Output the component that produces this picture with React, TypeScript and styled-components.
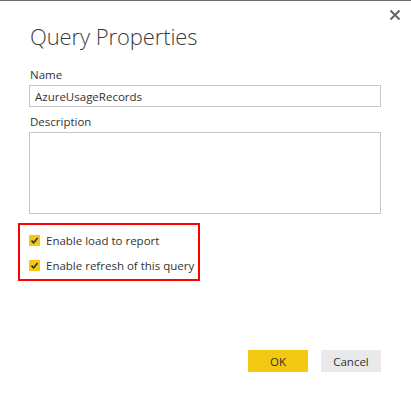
import styled, { createGlobalStyle } from 'styled-components';

const GlobalStyle = createGlobalStyle`
  html, body {
    margin: 0;
    padding: 0;
    background: #ffffff;
  }
  body {
    font-family: "Open Sans", "Noto Sans", sans-serif;
    color: #333333;
  }
`;

const Dialog = styled.div`
  position: relative;
  width: 411px;
  height: 401px;
  box-sizing: border-box;
  border-top: 1px solid #6b6b6b;
  background: #ffffff;
  padding: 20px 30px 0 29px;
  display: flex;
  flex-direction: column;
`;

const CloseButton = styled.button`
  position: absolute;
  top: 7px;
  right: 9px;
  width: 14px;
  height: 14px;
  padding: 0;
  border: none;
  background: transparent;
  display: flex;
  align-items: center;
  justify-content: center;
`;

const Title = styled.h1`
  margin: 0 0 0 1px;
  font-family: "Open Sans", sans-serif;
  font-weight: 300;
  font-size: 22px;
  line-height: 30px;
  color: #3b3b3b;
  letter-spacing: -0.1px;
`;

const Label = styled.label<{ $top: number }>`
  display: block;
  margin: ${(p) => p.$top}px 0 0 1px;
  font-size: 11.5px;
  line-height: 16px;
  color: #333333;
`;

const TextInput = styled.input`
  display: block;
  margin-top: 2px;
  width: 352px;
  height: 22px;
  box-sizing: border-box;
  border: 1px solid #c6c6c6;
  padding: 0 5px;
  font-family: "Open Sans", sans-serif;
  font-size: 11.5px;
  color: #333333;
  outline: none;
`;

const TextArea = styled.textarea`
  display: block;
  margin-top: 2px;
  width: 352px;
  height: 82px;
  box-sizing: border-box;
  border: 1px solid #c6c6c6;
  resize: none;
  outline: none;
`;

const Highlight = styled.div`
  margin: 9px 0 0 -11px;
  width: 182px;
  height: 58px;
  box-sizing: border-box;
  border: 2px solid #ff0000;
  padding: 7px 0 0 9px;
  display: flex;
  flex-direction: column;
  gap: 8px;
`;

const CheckRow = styled.div`
  display: flex;
  align-items: center;
  gap: 6px;
  font-size: 11.5px;
  line-height: 17px;
  white-space: nowrap;
  color: #333333;
`;

const Box = styled.span`
  width: 11px;
  height: 11px;
  flex: none;
  background: #f2c811;
  display: flex;
  align-items: center;
  justify-content: center;
`;

const Footer = styled.div`
  margin-top: auto;
  margin-bottom: 29px;
  display: flex;
  justify-content: flex-end;
  gap: 13px;
`;

const Button = styled.button<{ $primary?: boolean }>`
  width: 60px;
  height: 22px;
  border: none;
  padding: 0;
  background: ${(p) => (p.$primary ? '#f2c811' : '#e9e9e9')};
  font-family: "Open Sans", sans-serif;
  font-size: 11.5px;
  color: #333333;
`;

function Check() {
  return (
    <Box>
      <svg width="9" height="9" viewBox="0 0 9 9">
        <path d="M1.5 4.6 L3.6 6.7 L7.6 2" fill="none" stroke="#333" strokeWidth="1.6" />
      </svg>
    </Box>
  );
}

function App() {
  return (
    <>
      <GlobalStyle />
      <Dialog>
        <CloseButton aria-label="Close">
          <svg width="12" height="12" viewBox="0 0 12 12">
            <path d="M1.5 1.5 L10.5 10.5 M10.5 1.5 L1.5 10.5" stroke="#666" strokeWidth="2" />
          </svg>
        </CloseButton>
        <Title>Query Properties</Title>
        <Label $top={16}>Name</Label>
        <TextInput defaultValue="AzureUsageRecords" />
        <Label $top={7}>Description</Label>
        <TextArea />
        <Highlight>
          <CheckRow>
            <Check />
            Enable load to report
          </CheckRow>
          <CheckRow>
            <Check />
            Enable refresh of this query
          </CheckRow>
        </Highlight>
        <Footer>
          <Button $primary>OK</Button>
          <Button>Cancel</Button>
        </Footer>
      </Dialog>
    </>
  );
}

export default App;
